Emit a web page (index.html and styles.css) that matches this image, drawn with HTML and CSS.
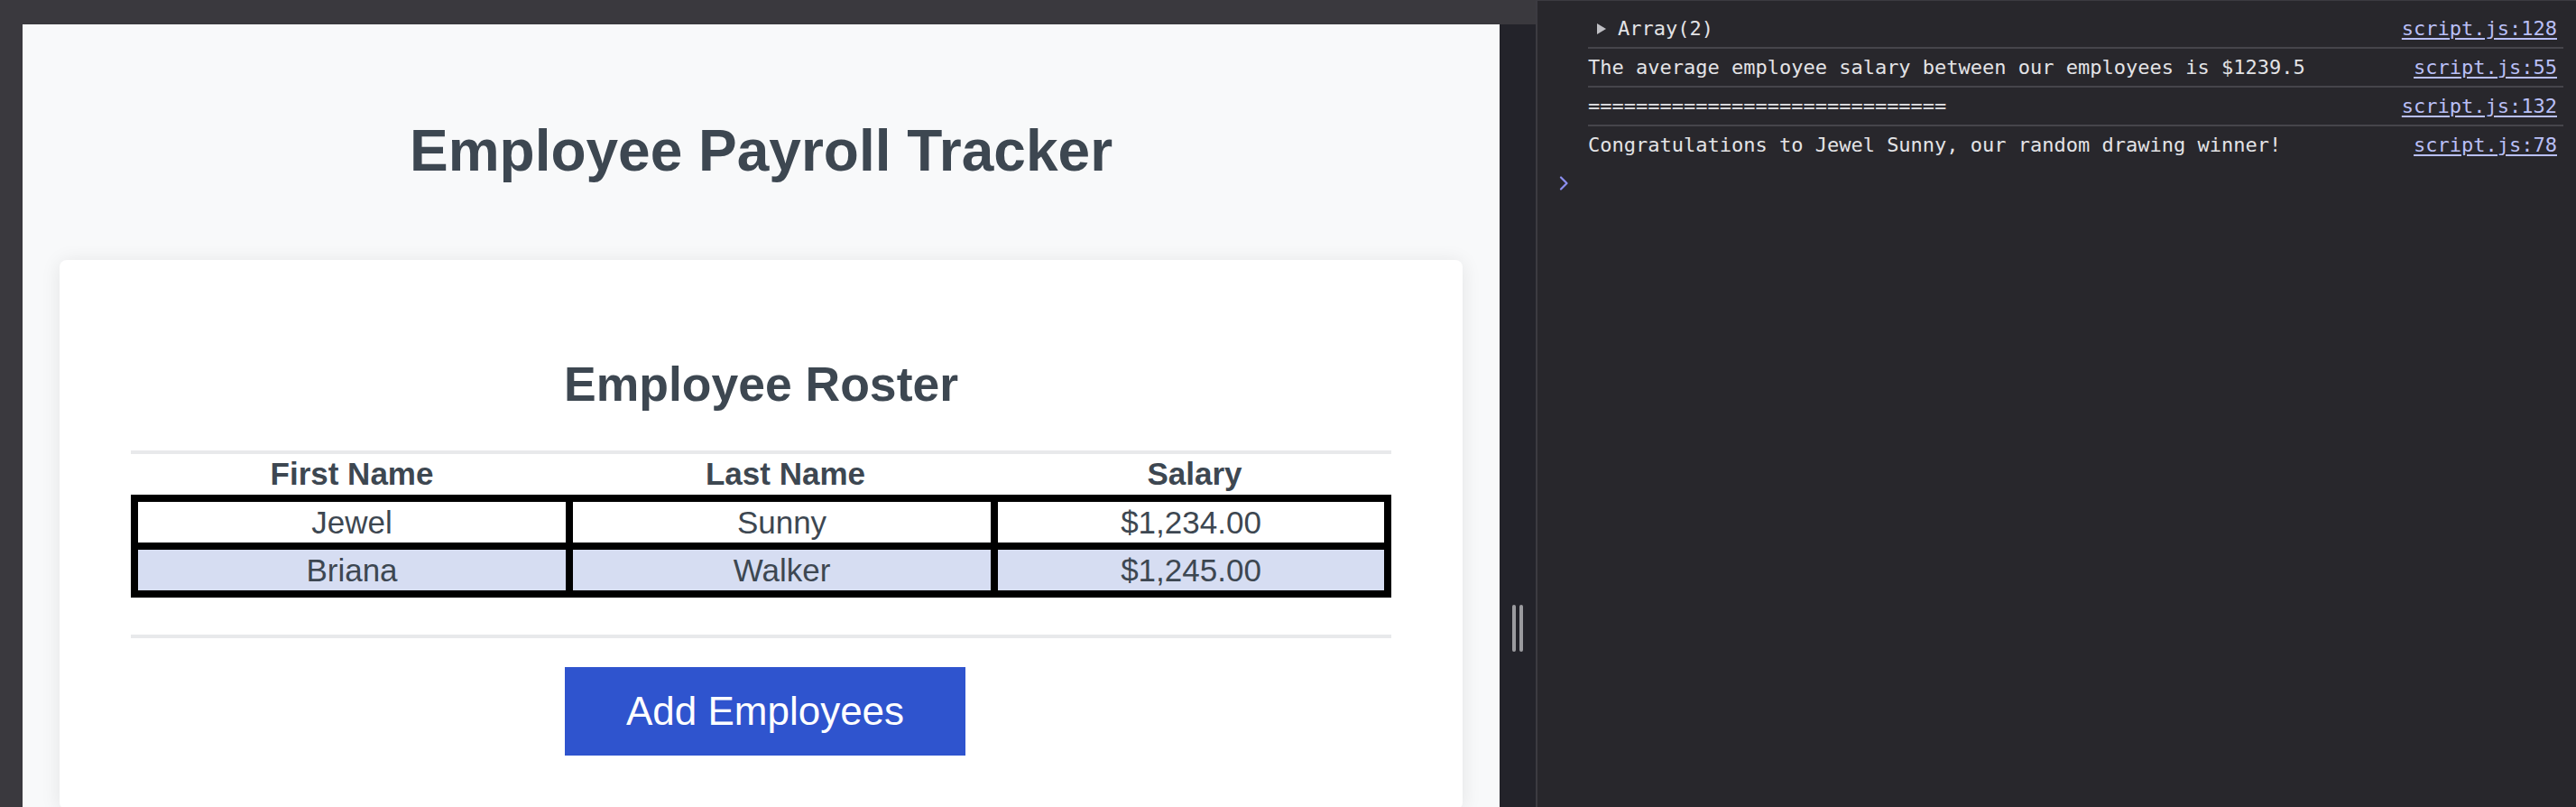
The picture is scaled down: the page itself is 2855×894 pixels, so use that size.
FILE: index.html
```html
<!DOCTYPE html>
<html lang="en">
<head>
<meta charset="utf-8">
<title>Employee Payroll Tracker</title>
<link rel="stylesheet" href="styles.css">
</head>
<body>
  <div class="browser">
    <div class="topbar"></div>
    <div class="pane-row">
      <div class="left-strip"></div>
      <main class="page">
        <h1 class="title">Employee Payroll Tracker</h1>
        <section class="card">
          <h2 class="card-title">Employee Roster</h2>
          <hr class="rule">
          <table class="roster">
            <colgroup>
              <col class="col-first">
              <col class="col-last">
              <col class="col-salary">
            </colgroup>
            <thead>
              <tr><th>First Name</th><th>Last Name</th><th>Salary</th></tr>
            </thead>
            <tbody>
              <tr><td>Jewel</td><td>Sunny</td><td>$1,234.00</td></tr>
              <tr class="alt"><td>Briana</td><td>Walker</td><td>$1,245.00</td></tr>
            </tbody>
          </table>
          <hr class="rule rule-bottom">
          <div class="actions">
            <button class="add-btn" type="button">Add Employees</button>
          </div>
        </section>
      </main>
      <div class="gutter">
        <span class="grip"></span><span class="grip"></span>
      </div>
    </div>
  </div>
  <aside class="console">
    <div class="messages">
      <div class="msg">
        <span class="msg-text"><svg class="expander" width="10" height="12" viewBox="0 0 10 12"><polygon points="0,0 10,6 0,12" fill="#bfbfc4"/></svg>Array(2)</span>
        <a class="src">script.js:128</a>
      </div>
      <div class="msg">
        <span class="msg-text">The average employee salary between our employees is $1239.5</span>
        <a class="src">script.js:55</a>
      </div>
      <div class="msg">
        <span class="msg-text">==============================</span>
        <a class="src">script.js:132</a>
      </div>
      <div class="msg msg-last">
        <span class="msg-text">Congratulations to Jewel Sunny, our random drawing winner!</span>
        <a class="src">script.js:78</a>
      </div>
    </div>
    <div class="prompt">
      <svg width="11" height="16" viewBox="0 0 11 16"><polyline points="2,1.5 8.5,8 2,14.5" fill="none" stroke="#8c8ff0" stroke-width="2.2" stroke-linecap="round" stroke-linejoin="round"/></svg>
    </div>
  </aside>
</body>
</html>
```

FILE: styles.css
```css
html, body {
  margin: 0;
  padding: 0;
}

body {
  height: 894px;
  overflow: hidden;
  display: flex;
  background: #3a393e;
}

.browser {
  width: 1702px;
  flex: none;
  display: flex;
  flex-direction: column;
}

.topbar {
  height: 27px;
  flex: none;
  background: #3a393e;
}

.pane-row {
  flex: 1;
  display: flex;
  min-height: 0;
}

.left-strip {
  width: 25px;
  flex: none;
  background: #3a393e;
}

.page {
  width: 1637px;
  flex: none;
  background: #f8f9fa;
  overflow: hidden;
  font-family: "Liberation Sans", Arial, Helvetica, sans-serif;
  color: #3d4751;
}

.title {
  margin: 0;
  padding-top: 103px;
  font-size: 64px;
  font-weight: bold;
  line-height: normal;
  text-align: center;
  color: #3d4751;
}

.card {
  margin: 83.5px 41px 0;
  padding: 107px 79px 60px;
  background: #ffffff;
  border-radius: 8px;
  box-shadow: 0 2px 22px rgba(0, 0, 0, 0.09);
}

.card-title {
  margin: 0;
  font-size: 53.5px;
  font-weight: bold;
  line-height: normal;
  text-align: center;
  color: #3d4751;
}

.rule {
  margin: 43px 0 0;
  height: 4px;
  border: 0;
  background: #e8e9eb;
}

.rule-bottom {
  margin-top: 41px;
}

.roster {
  width: 100%;
  border-spacing: 0;
  table-layout: fixed;
  font-size: 35px;
  color: #3d4751;
}

.col-first { width: 490px; }
.col-last { width: 471px; }
.col-salary { width: 436px; }

.roster th {
  padding: 2px 0 3px;
  line-height: 40px;
  font-weight: bold;
  text-align: center;
}

.roster td {
  padding: 2px 0;
  line-height: 41px;
  text-align: center;
  border-right: 8px solid #000;
  border-bottom: 8px solid #000;
}

.roster td:first-child {
  border-left: 8px solid #000;
}

.roster tbody tr:first-child td {
  border-top: 8px solid #000;
}

.roster tr.alt td {
  background: #d6ddf2;
}

.actions {
  margin-top: 32px;
  text-align: center;
}

.add-btn {
  margin-left: 9px;
  padding: 24px 68px;
  border: 0;
  border-radius: 0;
  background: #2f54ce;
  color: #ffffff;
  font-family: "Liberation Sans", Arial, Helvetica, sans-serif;
  font-size: 44px;
  line-height: normal;
}

.gutter {
  width: 40px;
  flex: none;
  background: #23232a;
  display: flex;
  justify-content: center;
  align-items: flex-start;
  gap: 4px;
  padding-top: 643px;
  box-sizing: border-box;
}

.grip {
  width: 4px;
  height: 52px;
  border-radius: 2px;
  background: #9b9b9f;
}

.console {
  flex: 1;
  background: #28272c;
  border-left: 2px solid #3c3b41;
  border-top: 1px solid #3c3b41;
  padding-top: 10px;
  font-family: "DejaVu Sans Mono", "Liberation Mono", monospace;
  font-size: 22px;
  color: #e3e3e6;
}

.messages {
  margin: 0 14px 0 56px;
}

.msg {
  display: flex;
  justify-content: space-between;
  align-items: center;
  height: 41px;
  line-height: 41px;
  border-bottom: 2px solid #46454b;
  white-space: pre;
}

.msg-last {
  border-bottom: 0;
}

.msg-text {
  display: flex;
  align-items: center;
}

.expander {
  margin: 0 13px 0 10px;
}

.src {
  padding-right: 7px;
  color: #b9bff6;
  text-decoration: underline;
  text-underline-offset: 3px;
}

.prompt {
  margin: 14px 0 0 24px;
  height: 16px;
}

.prompt svg {
  display: block;
}
```
